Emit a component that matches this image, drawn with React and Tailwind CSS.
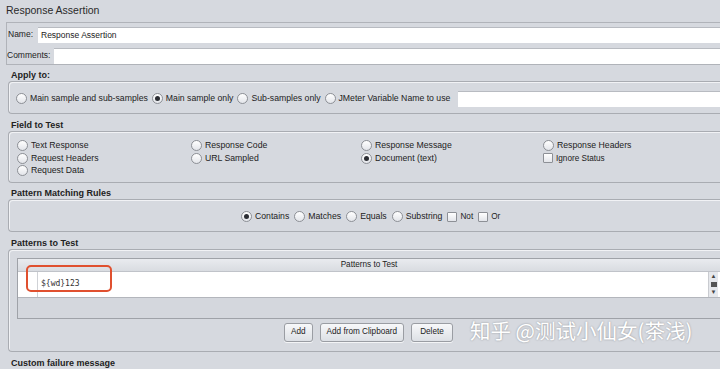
import React from 'react';

const Radio = ({ checked }) => (
  <span className="inline-flex h-[11px] w-[11px] shrink-0 items-center justify-center rounded-full border border-[#8d9096] bg-gradient-to-b from-white to-[#e3e5ea]">
    {checked && <span className="h-[5px] w-[5px] rounded-full bg-[#2b2d33]" />}
  </span>
);

const Check = () => (
  <span className="inline-block h-[10px] w-[10px] shrink-0 rounded-[1px] border border-[#8d9096] bg-gradient-to-b from-white to-[#e3e5ea]" />
);

const Option = ({ label, checked, box, className = '' }) => (
  <span className={`flex items-center gap-[3px] whitespace-nowrap ${className}`}>
    {box ? <Check /> : <Radio checked={checked} />}
    <span>{label}</span>
  </span>
);

const Heading = ({ children, className = '' }) => (
  <div className={`pl-[11px] text-[9px] font-bold text-[#222] ${className}`}>{children}</div>
);

const Panel = ({ children, className = '' }) => (
  <div
    className={`ml-[8px] rounded-l-[4px] border border-r-0 border-[#a9acb2] shadow-[inset_1px_1px_0_#f1f2f5] ${className}`}
  >
    {children}
  </div>
);

const Button = ({ children, className = 'px-[6px]' }) => (
  <button
    type="button"
    className={`h-[19px] rounded-[3px] border border-[#9a9da3] bg-gradient-to-b from-[#f7f8fa] to-[#dde0e5] text-[8.2px] text-[#222] shadow-[0_1px_0_#f3f4f6] ${className}`}
  >
    {children}
  </button>
);

export default function App() {
  return (
    <div className="relative h-[369px] w-[720px] overflow-hidden bg-[#d6d9df] font-['Liberation_Sans',Arial,sans-serif] text-[8.7px] text-[#222]">
      <div className="h-[22px] pl-[6px] pt-[3px] text-[10.5px] text-[#2a2a2a]">Response Assertion</div>

      <div className="ml-[6px] h-[43px] border border-r-0 border-[#b0b3b9] pt-[3px]">
        <div className="flex h-[17px] items-center">
          <span className="w-[31px] pl-[1px] text-[8.5px]">Name:</span>
          <div className="flex h-[16px] flex-1 items-center border-t border-[#b8bbc1] bg-white pl-[3px] text-[8.5px]">
            Response Assertion
          </div>
        </div>
        <div className="mt-[4px] flex h-[17px] items-center">
          <span className="w-[47px] text-[8.5px]">Comments:</span>
          <div className="h-[16px] flex-1 border-t border-[#b8bbc1] bg-white" />
        </div>
      </div>

      <Heading className="h-[16px] pt-[4px]">Apply to:</Heading>
      <Panel className="flex h-[33px] items-center gap-[4px] pl-[7px] pt-[2px]">
        <Option label="Main sample and sub-samples" />
        <Option label="Main sample only" checked />
        <Option label="Sub-samples only" />
        <Option label="JMeter Variable Name to use" />
        <div className="ml-[4px] h-[16px] flex-1 border-t border-[#b8bbc1] bg-white" />
      </Panel>

      <Heading className="h-[17px] pt-[5px]">Field to Test</Heading>
      <Panel className="h-[52px] pl-[8px] pt-[8px]">
        <div className="grid grid-cols-[174px_170px_182px_1fr] gap-y-[1.5px] leading-[11px]">
          <Option label="Text Response" />
          <Option label="Response Code" />
          <Option label="Response Message" />
          <Option label="Response Headers" />
          <Option label="Request Headers" />
          <Option label="URL Sampled" />
          <Option label="Document (text)" checked />
          <Option label="Ignore Status" box className="text-[8.2px]" />
          <Option label="Request Data" />
        </div>
      </Panel>

      <Heading className="h-[16px] pt-[4px]">Pattern Matching Rules</Heading>
      <Panel className="flex h-[33px] items-center pl-[232px] pt-[3px]">
        <div className="flex items-center gap-[5px]">
          <Option label="Contains" checked />
          <Option label="Matches" />
          <Option label="Equals" />
          <Option label="Substring" />
          <Option label="Not" box className="text-[8.2px]" />
          <Option label="Or" box className="text-[8.2px]" />
        </div>
      </Panel>

      <Heading className="h-[17px] pt-[5px]">Patterns to Test</Heading>
      <Panel className="h-[103px] pl-[8px] pt-[8px]">
        <div className="relative h-[61px] border border-r-0 border-[#9fa2a8] bg-[#d4d7dd]">
          <div className="flex h-[13px] items-center justify-center border-b border-[#c0c3c9] bg-gradient-to-b from-[#e9ebef] to-[#d9dce1] text-[8.2px]">
            Patterns to Test
          </div>
          <div className="flex h-[26px] border-b border-[#b3b6bc] bg-white">
            <div className="w-[20px] border-r border-[#d0d2d6]" />
            <div className="flex-1 pl-[3px] pt-[6px] font-['DejaVu_Sans_Mono',monospace] text-[8px] text-[#333]">
              {'${wd}123'}
            </div>
            <div className="mr-[2px] flex w-[10px] flex-col items-center justify-between border-l border-[#c9cbd0] bg-[#e6e8ec] py-[1px] text-[6px] leading-[7px] text-[#444]">
              <span>▲</span>
              <span className="h-[5px] w-[6px] bg-[#555]" />
              <span>▼</span>
            </div>
          </div>
          <div className="absolute left-[8px] top-[6px] h-[27px] w-[86px] rounded-[5px] border-2 border-[#e0502f]" />
        </div>
        <div className="mt-[4px] flex items-start">
          <div className="ml-[267px] flex gap-[7px]">
            <Button>Add</Button>
            <Button>Add from Clipboard</Button>
            <Button className="px-[8px]">Delete</Button>
          </div>
        </div>
      </Panel>

      <Heading className="h-[17px] pt-[5px]">Custom failure message</Heading>

      <div className="absolute left-[470px] top-[313px] whitespace-nowrap font-['Noto_Sans_CJK_SC',sans-serif] text-[20.5px] leading-[34px] text-white [text-shadow:0_0_2px_rgba(0,0,0,0.35)]">
        知乎 @测试小仙女(茶浅)
      </div>
    </div>
  );
}
